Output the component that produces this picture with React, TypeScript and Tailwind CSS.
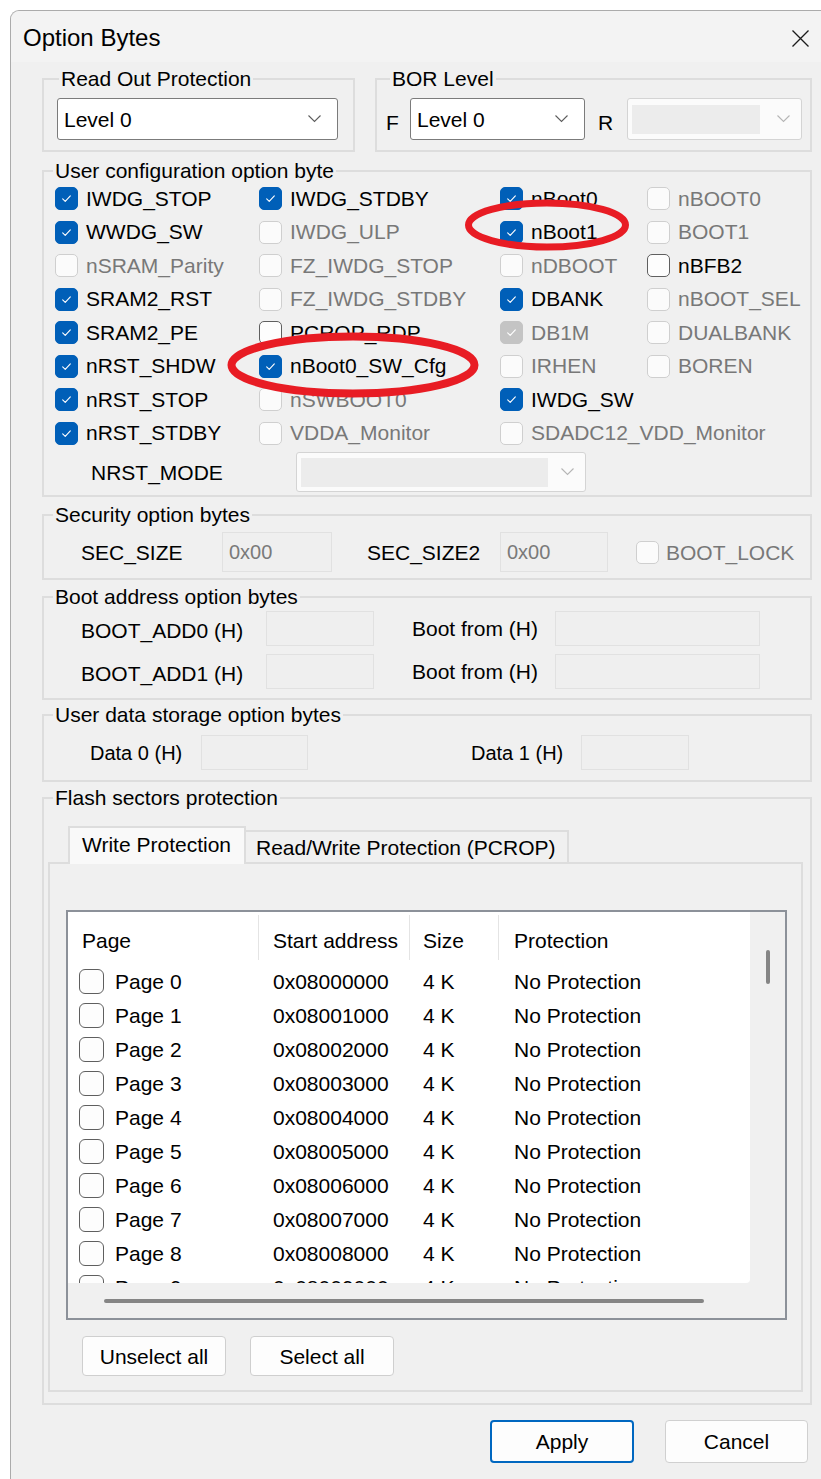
import React from 'react';

type Tick = 'on' | 'off' | 'dis' | 'disOn';

const boxTone: Record<Tick, string> = {
  on: 'border-[#005fb8] bg-[#005fb8]',
  disOn: 'border-[#c4c4c4] bg-[#c4c4c4]',
  off: 'border-[#5f5f5f] bg-[#fdfdfd]',
  dis: 'border-[#cfcfcf] bg-[#fbfbfb]',
};

function Tickbox({ state, big = false }: { state: Tick; big?: boolean }) {
  const checked = state === 'on' || state === 'disOn';
  const size = big ? 'h-[25px] w-[25px] rounded-[6px]' : 'h-[23px] w-[23px] rounded-[5px]';
  return (
    <span className={`flex shrink-0 items-center justify-center border-[1.5px] ${size} ${boxTone[state]}`}>
      {checked && (
        <svg viewBox="0 0 20 20" className="h-[17px] w-[17px]" fill="none" stroke="#ffffff" strokeWidth="1.3" strokeLinecap="round" strokeLinejoin="round">
          <path d="M5.5 10.5l3 3 6-6.5" />
        </svg>
      )}
    </span>
  );
}

function Option({ label, state }: { label: string; state: Tick }) {
  const muted = state === 'dis' || state === 'disOn';
  return (
    <div className="flex h-[33.5px] items-center gap-[8px] whitespace-nowrap">
      <Tickbox state={state} />
      <span className={`text-[21px] leading-[22px] ${muted ? 'text-[#787878]' : 'text-black'}`}>{label}</span>
    </div>
  );
}

function Chevron({ color }: { color: string }) {
  return (
    <svg width="13" height="8" viewBox="0 0 13 8" className="shrink-0">
      <path d="M0.5 0.5L6.5 6.5L12.5 0.5" stroke={color} fill="none" strokeWidth="1.1" />
    </svg>
  );
}

function Combo({ value, className }: { value: string; className: string }) {
  return (
    <div className={`flex items-center rounded-[3px] border border-[#7b7b7b] bg-white pl-[6px] pr-[16px] ${className}`}>
      <span className="flex-1 text-[21px] leading-none">{value}</span>
      <Chevron color="#5c5c5c" />
    </div>
  );
}

// greyed-out combo: empty text area plus a faded arrow
function DeadCombo({ className, fill }: { className: string; fill: string }) {
  return (
    <div className={`flex items-center rounded-[3px] border border-[#d4d4d4] bg-[#fbfbfb] pl-[4px] pr-[11px] ${className}`}>
      <div className={`h-[29px] bg-[#ececec] ${fill}`} />
      <div className="flex-1" />
      <Chevron color="#b5b5b5" />
    </div>
  );
}

function Field({ className, value = '' }: { className: string; value?: string }) {
  return (
    <div className={`flex items-center border border-[#e1e1e1] bg-[#efefef] pl-[6px] text-[20px] leading-none text-[#7a7a7a] ${className}`}>
      {value}
    </div>
  );
}

function Group({ title, inset, className, children }: { title: string; inset: string; className: string; children: React.ReactNode }) {
  return (
    <fieldset className={`min-w-0 border-2 border-[#dddddd] ${className}`}>
      <legend className={`px-[2px] text-[21px] leading-[22px] ${inset}`}>{title}</legend>
      {children}
    </fieldset>
  );
}

function Button({ label, className }: { label: string; className: string }) {
  return (
    <div className={`flex items-center justify-center rounded-[4px] bg-[#fdfdfd] text-[21px] leading-none ${className}`}>
      {label}
    </div>
  );
}

const userOptions: ([string, Tick] | null)[] = [
  ['IWDG_STOP', 'on'], ['IWDG_STDBY', 'on'], ['nBoot0', 'on'], ['nBOOT0', 'dis'],
  ['WWDG_SW', 'on'], ['IWDG_ULP', 'dis'], ['nBoot1', 'on'], ['BOOT1', 'dis'],
  ['nSRAM_Parity', 'dis'], ['FZ_IWDG_STOP', 'dis'], ['nDBOOT', 'dis'], ['nBFB2', 'off'],
  ['SRAM2_RST', 'on'], ['FZ_IWDG_STDBY', 'dis'], ['DBANK', 'on'], ['nBOOT_SEL', 'dis'],
  ['SRAM2_PE', 'on'], ['PCROP_RDP', 'off'], ['DB1M', 'disOn'], ['DUALBANK', 'dis'],
  ['nRST_SHDW', 'on'], ['nBoot0_SW_Cfg', 'on'], ['IRHEN', 'dis'], ['BOREN', 'dis'],
  ['nRST_STOP', 'on'], ['nSWBOOT0', 'dis'], ['IWDG_SW', 'on'], null,
  ['nRST_STDBY', 'on'], ['VDDA_Monitor', 'dis'], ['SDADC12_VDD_Monitor', 'dis'], null,
];

const pages = Array.from({ length: 10 }, (_, i) => ({
  name: `Page ${i}`,
  addr: `0x0800${i.toString(16).toUpperCase()}000`,
}));

export default function App() {
  return (
    <div className="relative h-[1479px] w-[821px] overflow-hidden bg-white pl-[10px] pt-[10px] font-['Liberation_Sans',Arial,sans-serif] text-black">
      <div className="h-[1480px] w-[820px] rounded-tl-[9px] border-l border-t border-[#ababab] bg-[#f0f0f0]">
        {/* title bar */}
        <div className="flex h-[51px] items-center rounded-tl-[9px] bg-[#f3f3f3] pl-[12px] pt-[3px]">
          <span className="text-[24px] leading-none">Option Bytes</span>
          <svg width="17" height="17" viewBox="0 0 17 17" className="ml-auto mr-[21px]">
            <path d="M0.5 0.5L16.5 16.5M16.5 0.5L0.5 16.5" stroke="#1b1b1b" strokeWidth="1.3" />
          </svg>
        </div>

        <div className="ml-[31px] flex w-[770px] flex-col pt-[6px]">
          <div className="flex gap-[20px]">
            <Group title="Read Out Protection" inset="ml-[15px]" className="w-[313px] pb-[10px]">
              <div className="ml-[13px] mt-[8px]">
                <Combo value="Level 0" className="h-[42px] w-[281px]" />
              </div>
            </Group>
            <Group title="BOR Level" inset="ml-[13px]" className="w-[437px] pb-[10px]">
              <div className="mt-[8px] flex items-center pl-[9px]">
                <span className="w-[24px] pt-[6px] text-[21px] leading-none">F</span>
                <Combo value="Level 0" className="h-[42px] w-[175px]" />
                <span className="ml-[13px] w-[29px] pt-[6px] text-[21px] leading-none">R</span>
                <DeadCombo className="h-[42px] w-[175px]" fill="w-[128px]" />
              </div>
            </Group>
          </div>

          <Group title="User configuration option byte" inset="ml-[9px]" className="mt-[8px] pb-[3px]">
            <div className="ml-[11px] grid grid-cols-[204px_241px_147px_1fr]">
              {userOptions.map((o, i) =>
                o ? <Option key={i} label={o[0]} state={o[1]} /> : <div key={i} className="h-[33.5px]" />
              )}
            </div>
            <div className="mt-[2px] flex h-[40px] items-center">
              <span className="ml-[47px] w-[205px] text-[21px] leading-none">NRST_MODE</span>
              <DeadCombo className="h-[40px] w-[290px]" fill="w-[247px]" />
            </div>
          </Group>

          <Group title="Security option bytes" inset="ml-[9px]" className="mt-[7px] pb-[6px]">
            <div className="mt-[6px] flex h-[40px] items-center pl-[37px] text-[21px] leading-none">
              <span className="w-[141px]">SEC_SIZE</span>
              <Field className="h-[40px] w-[110px]" value="0x00" />
              <span className="ml-[35px] w-[133px]">SEC_SIZE2</span>
              <Field className="h-[40px] w-[108px]" value="0x00" />
              <span className="ml-[28px] flex items-center gap-[7px]">
                <Tickbox state="dis" />
                <span className="text-[#787878]">BOOT_LOCK</span>
              </span>
            </div>
          </Group>

          <Group title="Boot address option bytes" inset="ml-[9px]" className="mt-[6px] pb-[9px]">
            {['BOOT_ADD0 (H)', 'BOOT_ADD1 (H)'].map((label, i) => (
              <div key={label} className={`flex h-[35px] items-center pl-[37px] text-[21px] leading-none ${i === 0 ? 'mt-[3px]' : 'mt-[8px]'}`}>
                <span className="w-[185px] pt-[3px]">{label}</span>
                <Field className="h-[35px] w-[108px]" />
                <span className="ml-[38px] w-[143px]">Boot from (H)</span>
                <Field className="h-[35px] w-[205px]" />
              </div>
            ))}
          </Group>

          <Group title="User data storage option bytes" inset="ml-[9px]" className="mt-[4px] pb-[10px]">
            <div className="mt-[9px] flex h-[35px] items-center pl-[46px] text-[20px] leading-none">
              <span className="w-[111px]">Data 0 (H)</span>
              <Field className="h-[35px] w-[107px]" />
              <span className="ml-[163px] w-[110px]">Data 1 (H)</span>
              <Field className="h-[35px] w-[108px]" />
            </div>
          </Group>

          <Group title="Flash sectors protection" inset="ml-[9px]" className="mt-[5px] pb-[11px]">
            <div className="ml-[4px] mr-[7px]">
              {/* tabs */}
              <div className="mt-[17px] flex h-[36px] items-end pl-[20px] text-[21px] leading-none">
                <div className="relative z-10 -mb-[2px] flex h-[38px] w-[178px] items-center border-2 border-b-0 border-[#dddddd] bg-[#f9f9f9] pb-[4px] pl-[12px]">
                  Write Protection
                </div>
                <div className="flex h-[32px] w-[323px] items-center border-2 border-b-0 border-l-0 border-[#dddddd] bg-[#f0f0f0] pl-[10px]">
                  Read/Write Protection (PCROP)
                </div>
              </div>

              <div className="border-2 border-[#dddddd] pb-[14px] pl-[16px] pr-[14px] pt-[46px]">
                {/* page list */}
                <div className="flex h-[410px] flex-col border-2 border-[#8c9199]">
                  <div className="flex h-[371px]">
                    <div className="w-[682px] overflow-hidden rounded-br-[4px] bg-white text-[21px] leading-none">
                      <div className="flex h-[52px] pt-[3px]">
                        <div className="flex h-[45px] w-[191px] items-center border-r border-[#e4e4e4] pl-[14px] pt-[5px]">Page</div>
                        <div className="flex h-[45px] w-[151px] items-center border-r border-[#e4e4e4] pl-[14px] pt-[5px]">Start address</div>
                        <div className="flex h-[45px] w-[89px] items-center border-r border-[#e4e4e4] pl-[13px] pt-[5px]">Size</div>
                        <div className="flex h-[45px] flex-1 items-center pl-[15px] pt-[5px]">Protection</div>
                      </div>
                      {pages.map((p) => (
                        <div key={p.name} className="flex h-[34px] items-center">
                          <div className="flex w-[191px] items-center gap-[11px] pl-[11px]">
                            <Tickbox state="off" big />
                            <span>{p.name}</span>
                          </div>
                          <div className="w-[151px] pl-[14px]">{p.addr}</div>
                          <div className="w-[89px] pl-[13px]">4 K</div>
                          <div className="flex-1 pl-[15px]">No Protection</div>
                        </div>
                      ))}
                    </div>
                    <div className="flex-1 bg-[#f0f0f0]">
                      <div className="ml-[16px] mt-[38px] h-[34px] w-[4px] rounded-full bg-[#858585]" />
                    </div>
                  </div>
                  <div className="flex-1 bg-[#f0f0f0]">
                    <div className="ml-[36px] mt-[16px] h-[4px] w-[600px] rounded-full bg-[#858585]" />
                  </div>
                </div>

                <div className="mt-[16px] flex gap-[24px] pl-[16px]">
                  <Button label="Unselect all" className="h-[40px] w-[144px] border border-[#cfcfcf]" />
                  <Button label="Select all" className="h-[40px] w-[144px] border border-[#cfcfcf]" />
                </div>
              </div>
            </div>
          </Group>

          <div className="mt-[15px] flex justify-end gap-[31px] pr-[4px]">
            <Button label="Apply" className="h-[43px] w-[144px] border-2 border-[#0067c0]" />
            <Button label="Cancel" className="h-[43px] w-[143px] border border-[#d0d0d0]" />
          </div>
        </div>
      </div>

      {/* red highlight rings */}
      <svg className="pointer-events-none absolute left-[462px] top-[196px]" width="170" height="58" viewBox="0 0 170 58">
        <ellipse cx="85" cy="29" rx="78.5" ry="22" fill="none" stroke="#e81c24" strokeWidth="7" />
      </svg>
      <svg className="pointer-events-none absolute left-[224px] top-[329px]" width="258" height="72" viewBox="0 0 258 72">
        <ellipse cx="129" cy="36" rx="121.5" ry="28.5" fill="none" stroke="#e81c24" strokeWidth="8" />
      </svg>
    </div>
  );
}
